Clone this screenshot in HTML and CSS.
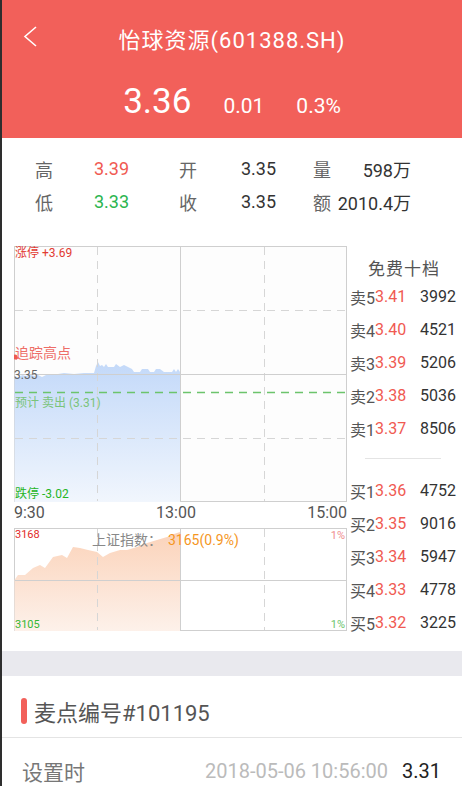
FILE: index.html
```html
<!DOCTYPE html>
<html>
<head>
    <meta charset="utf-8">
    <title>怡球资源(601388.SH)</title>
    <link rel="stylesheet" href="styles.css">
</head>
<body>
    <div class="page">
        <header class="topbar">
            <div class="nav">
                <svg class="back" width="16" height="24" viewBox="0 0 16 24">
                    <polyline points="13,2 2,11.5 13,21" fill="none" stroke="#fff" stroke-width="1.6"/>
                </svg>
                <h1 class="title">怡球资源(601388.SH)</h1>
            </div>
            <div class="price-row">
                <span class="price">3.36</span>
                <span class="change">0.01</span>
                <span class="change">0.3%</span>
            </div>
        </header>

        <div class="stats">
            <span class="label">高</span><span class="val up">3.39</span>
            <span class="label">开</span><span class="val">3.35</span>
            <span class="label">量</span><span class="val right">598万</span>
            <span class="label">低</span><span class="val down">3.33</span>
            <span class="label">收</span><span class="val">3.35</span>
            <span class="label">额</span><span class="val right">2010.4万</span>
        </div>

        <div class="market">
            <div class="charts">
                <svg class="chart" width="333" height="256" viewBox="0 0 333 256">
                    <defs>
                        <linearGradient id="blue" x1="0" y1="0" x2="0" y2="1">
                            <stop offset="0" stop-color="#c3d9f9"/>
                            <stop offset="1" stop-color="#f1f6fd"/>
                        </linearGradient>
                    </defs>
                    <rect x="0.5" y="0.5" width="332" height="255" fill="#fdfdfd" stroke="#cfcfcf"/>
                    <path d="M0.5,256 L0.5,131 L6,131 L8,129 L12,130 L16,128 L20,130 L24,129 L28,131 L32,129 L36,128 L44,128 L50,127 L60,128 L70,127 L80,127 L82,120 L84,116 L86,120 L88,119 L90,121 L92,118 L94,121 L100,121 L102,118 L106,121 L110,119 L114,121 L118,123 L120,126 L126,126 L128,123 L134,123 L136,126 L140,126 L142,123 L146,123 L150,126 L158,126 L160,123 L162,126 L164,123 L166,126 L166,256 Z" fill="url(#blue)"/>
                    <g stroke="#d6d6d6" stroke-dasharray="8 6" fill="none">
                        <line x1="83.5" y1="1" x2="83.5" y2="255"/>
                        <line x1="250.5" y1="1" x2="250.5" y2="255"/>
                        <line x1="1" y1="64.5" x2="332" y2="64.5"/>
                        <line x1="1" y1="192.5" x2="332" y2="192.5"/>
                    </g>
                    <line x1="166.5" y1="1" x2="166.5" y2="255" stroke="#cfcfcf"/>
                    <line x1="1" y1="128.5" x2="332" y2="128.5" stroke="#cfcfcf"/>
                    <line x1="1" y1="146.5" x2="332" y2="146.5" stroke="#6cc46c" stroke-width="1.5" stroke-dasharray="8 6"/>
                    <text class="tag" x="1" y="11" fill="#e23b32">涨停 +3.69</text>
                    <text class="tag tag-lg" x="1" y="112" fill="#ee6e68">追踪高点</text>
                    <circle cx="1" cy="111" r="2.5" fill="#ee5a52"/>
                    <text class="tag" x="0" y="133" fill="#666">3.35</text>
                    <text class="tag" x="1" y="161" fill="#7bc47b">预计 卖出 (3.31)</text>
                    <text class="tag" x="1" y="252" fill="#25b525">跌停 -3.02</text>
                </svg>
                <div class="axis">
                    <span>9:30</span>
                    <span>13:00</span>
                    <span>15:00</span>
                </div>
                <svg class="chart" width="333" height="103" viewBox="0 0 333 103">
                    <defs>
                        <linearGradient id="peach" x1="0" y1="0" x2="0" y2="1">
                            <stop offset="0" stop-color="#fbd3ba"/>
                            <stop offset="1" stop-color="#fdf1ea"/>
                        </linearGradient>
                    </defs>
                    <rect x="0.5" y="0.5" width="332" height="102" fill="#fff" stroke="#cfcfcf"/>
                    <path d="M0.5,103 L0.5,52 L4,47 L11,47 L19,40 L26,37 L31,40 L39,29 L48,27 L53,30 L59,19 L66,20 L74,22 L83,24 L89,29 L96,25 L106,22 L113,22 L123,19 L133,15 L143,12 L153,9 L160,6 L166,4 L166,103 Z" fill="url(#peach)"/>
                    <g stroke="#d6d6d6" stroke-dasharray="8 6" fill="none">
                        <line x1="83.5" y1="1" x2="83.5" y2="102"/>
                        <line x1="250.5" y1="1" x2="250.5" y2="102"/>
                    </g>
                    <line x1="166.5" y1="1" x2="166.5" y2="102" stroke="#cfcfcf"/>
                    <line x1="1" y1="52.5" x2="332" y2="52.5" stroke="#cfcfcf"/>
                    <text class="tag tag-sm" x="1" y="10" fill="#e22a2a">3168</text>
                    <text class="tag tag-sm" x="1" y="100" fill="#33b833">3105</text>
                    <text class="tag tag-sm" x="331" y="11" fill="#ef8d8d" text-anchor="end">1%</text>
                    <text class="tag tag-sm" x="331" y="100" fill="#6cc46c" text-anchor="end">1%</text>
                    <text class="tag tag-md" x="78" y="17" fill="#888">上证指数：</text>
                    <text class="tag tag-md" x="154" y="17" fill="#f5961e">3165(0.9%)</text>
                </svg>
            </div>

            <div class="book">
                <div class="book-title">免费十档</div>
                <div class="book-row"><span class="side">卖5</span><span class="bp">3.41</span><span class="vol">3992</span></div>
                <div class="book-row"><span class="side">卖4</span><span class="bp">3.40</span><span class="vol">4521</span></div>
                <div class="book-row"><span class="side">卖3</span><span class="bp">3.39</span><span class="vol">5206</span></div>
                <div class="book-row"><span class="side">卖2</span><span class="bp">3.38</span><span class="vol">5036</span></div>
                <div class="book-row"><span class="side">卖1</span><span class="bp">3.37</span><span class="vol">8506</span></div>
                <div class="book-sep"></div>
                <div class="book-row"><span class="side">买1</span><span class="bp">3.36</span><span class="vol">4752</span></div>
                <div class="book-row"><span class="side">买2</span><span class="bp">3.35</span><span class="vol">9016</span></div>
                <div class="book-row"><span class="side">买3</span><span class="bp">3.34</span><span class="vol">5947</span></div>
                <div class="book-row"><span class="side">买4</span><span class="bp">3.33</span><span class="vol">4778</span></div>
                <div class="book-row"><span class="side">买5</span><span class="bp">3.32</span><span class="vol">3225</span></div>
            </div>
        </div>

        <div class="band"></div>

        <div class="section-title">
            <span class="mark"></span>
            <span>麦点编号#101195</span>
        </div>
        <div class="detail-row">
            <span class="detail-label">设置时</span>
            <span class="detail-date">2018-05-06 10:56:00</span>
            <span class="detail-val">3.31</span>
        </div>
    </div>
</body>
</html>
```

FILE: styles.css
```css
body {
    margin: 0;
    font-family: Roboto, "Noto Sans CJK SC", sans-serif;
    background-color: #fff;
    color: #333;
}

.page {
    width: 462px;
    height: 786px;
    overflow: hidden;
    border-left: 2px solid #2e2e2e;
    box-sizing: border-box;
}

.topbar {
    background-color: #f2605a;
    color: #fff;
    height: 138px;
}

.nav {
    height: 75px;
    display: flex;
    align-items: center;
    justify-content: center;
    position: relative;
}

.back {
    position: absolute;
    left: 21px;
    top: 25px;
}

.title {
    margin: 0;
    font-size: 22px;
    font-weight: normal;
    letter-spacing: 1px;
}

.price-row {
    display: flex;
    justify-content: center;
    align-items: baseline;
    gap: 32px;
    padding-top: 6px;
}

.price {
    font-size: 35px;
}

.change {
    font-size: 21px;
}

.stats {
    display: grid;
    grid-template-columns: 59px 85px 62px 72px 21px 77px;
    grid-auto-rows: 33px;
    align-items: center;
    padding: 14px 0 0 33px;
    font-size: 18px;
    height: 66px;
}

.label {
    color: #666;
}

.val {
    color: #333;
}

.val.right {
    text-align: right;
}

.up {
    color: #f05a52;
}

.down {
    color: #2bb54f;
}

.market {
    display: flex;
    margin-top: 28px;
    padding-bottom: 12px;
}

.charts {
    margin-left: 12px;
    width: 333px;
}

.chart {
    display: block;
}

.tag {
    font-family: Roboto, "Noto Sans CJK SC", sans-serif;
    font-size: 12px;
}

.tag-lg {
    font-size: 14px;
}

.tag-md {
    font-size: 14px;
}

.tag-sm {
    font-size: 11px;
}

.axis {
    display: flex;
    justify-content: space-between;
    height: 26px;
    line-height: 22px;
    font-size: 16px;
    color: #555;
}

.book {
    width: 112px;
    padding-left: 3px;
    padding-top: 12px;
}

.book-title {
    height: 22px;
    line-height: 22px;
    text-align: center;
    font-size: 17px;
    color: #555;
    letter-spacing: 1px;
    padding-right: 4px;
}

.book-row {
    display: flex;
    align-items: center;
    height: 33px;
    font-size: 16px;
}

.side {
    color: #555;
}

.bp {
    color: #f05a52;
}

.vol {
    margin-left: auto;
    margin-right: 6px;
    color: #333;
}

.book-sep {
    height: 1px;
    background-color: #e4e4e4;
    margin: 13px 21px 15px 15px;
}

.band {
    height: 25px;
    background-color: #e9e9ee;
}

.section-title {
    display: flex;
    align-items: center;
    height: 62px;
    padding-top: 8px;
    box-sizing: border-box;
    padding-left: 19px;
    font-size: 22px;
    color: #555;
    border-bottom: 1px solid #e4e4e4;
}

.mark {
    width: 6px;
    height: 26px;
    border-radius: 3px;
    background-color: #f2605a;
    margin-right: 7px;
}

.detail-row {
    display: flex;
    align-items: center;
    padding: 20px 21px 0 20px;
    height: 26px;
    font-size: 20px;
}

.detail-label {
    color: #777;
    font-size: 21px;
}

.detail-date {
    margin-left: auto;
    color: #bbb;
}

.detail-val {
    margin-left: 14px;
    color: #222;
}
```
